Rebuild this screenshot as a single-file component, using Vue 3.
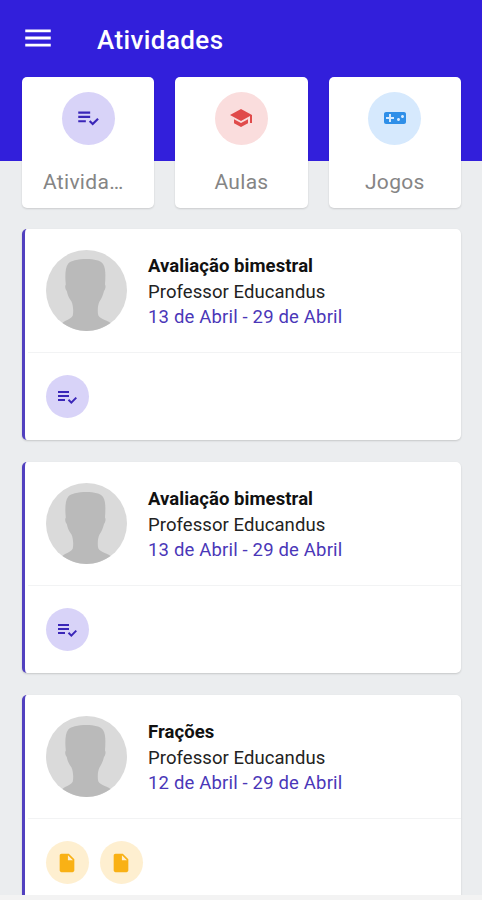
<template>
  <div class="page">
    <header class="header">
      <button class="menu-btn" aria-label="Menu">
        <svg viewBox="0 0 24 24"><path d="M3 18h18v-2H3v2zm0-5h18v-2H3v2zm0-7v2h18V6H3z" /></svg>
      </button>
      <h1>Atividades</h1>
    </header>

    <nav class="tabs">
      <div v-for="tab in tabs" :key="tab.label" class="tab">
        <span :class="['icon', 'icon-lg', tab.color]">
          <svg viewBox="0 0 24 24"><path :d="icons[tab.icon]" /></svg>
        </span>
        <span class="tab-label">{{ tab.label }}</span>
      </div>
    </nav>

    <main class="list">
      <article v-for="item in activities" :key="item.id" class="card">
        <div class="card-info">
          <svg class="avatar" viewBox="0 0 81 81">
            <circle class="avatar-bg" cx="40.5" cy="40.5" r="40.5" />
            <path
              class="avatar-person"
              d="M16.500 73C20 69.500 27 69 27 64C27.500 60 27 55 25.500 51.500C23 48 21.500 45 20.800 41C19 39 18.800 36 19.800 34.500C19 27 19 18 22 14C26 8 53 7 57 14C60 18 59.500 27 59 34.500C60 36 59.500 39 58 41C57 45 55.500 48.500 53.500 51.500C51.800 55 51.500 60 52 64C52.500 69 60 69.500 64.500 73A40.500 40.500 0 0 1 16.500 73Z"
            />
          </svg>
          <div class="card-text">
            <strong>{{ item.title }}</strong>
            <span>{{ item.teacher }}</span>
            <span class="date">{{ item.period }}</span>
          </div>
        </div>
        <div class="card-actions">
          <span v-for="(action, idx) in item.actions" :key="idx" :class="['icon', action.icon, action.color]">
            <svg viewBox="0 0 24 24"><path :d="icons[action.icon]" /></svg>
          </span>
        </div>
      </article>
    </main>
  </div>
</template>

<script setup>
import { ref } from 'vue'

const icons = {
  check: 'M3 10h11v2H3zm0-4h11v2H3zm0 8h7v2H3zm17.59-2.07l-4.25 4.24-2.12-2.12-1.41 1.41L16.34 19 22 13.34z',
  school: 'M5 13.18v4L12 21l7-3.82v-4L12 17l-7-3.82zM12 3L1 9l11 6 9-4.91V17h2V9L12 3z',
  game: 'M21 6H3c-1.1 0-2 .9-2 2v8c0 1.1.9 2 2 2h18c1.1 0 2-.9 2-2V8c0-1.1-.9-2-2-2zm-10 7H8v3H6v-3H3v-2h3V8h2v3h3v2zm4.5 2c-.83 0-1.5-.67-1.5-1.5s.67-1.5 1.5-1.5 1.5.67 1.5 1.5-.67 1.5-1.5 1.5zm4-3c-.83 0-1.5-.67-1.5-1.5S18.67 9 19.5 9s1.5.67 1.5 1.5-.67 1.5-1.5 1.5z',
  file: 'M6 2c-1.1 0-1.99.9-1.99 2L4 20c0 1.1.89 2 1.99 2H18c1.1 0 2-.9 2-2V8l-6-6H6zm7 7V3.5L18.5 9H13z'
}

const tabs = ref([
  { label: 'Atividades', icon: 'check', color: 'primary' },
  { label: 'Aulas', icon: 'school', color: 'danger' },
  { label: 'Jogos', icon: 'game', color: 'info' }
])

const activities = ref([
  {
    id: 1,
    title: 'Avaliação bimestral',
    teacher: 'Professor Educandus',
    period: '13 de Abril - 29 de Abril',
    actions: [{ icon: 'check', color: 'primary' }]
  },
  {
    id: 2,
    title: 'Avaliação bimestral',
    teacher: 'Professor Educandus',
    period: '13 de Abril - 29 de Abril',
    actions: [{ icon: 'check', color: 'primary' }]
  },
  {
    id: 3,
    title: 'Frações',
    teacher: 'Professor Educandus',
    period: '12 de Abril - 29 de Abril',
    actions: [
      { icon: 'file', color: 'warning' },
      { icon: 'file', color: 'warning' }
    ]
  }
])
</script>

<style>
body {
  margin: 0;
  overflow: hidden;
}
</style>

<style scoped>
.page {
  box-sizing: border-box;
  height: 900px;
  display: flex;
  flex-direction: column;
  overflow: hidden;
  background: #ebedef;
  border-bottom: 5px solid #f3f3f3;
  font-family: Roboto, sans-serif;
}

.header {
  box-sizing: border-box;
  flex: none;
  height: 161px;
  padding: 21px 21px 0;
  display: flex;
  align-items: flex-start;
  gap: 42px;
  background: #321fdb;
  color: #fff;
}

.menu-btn {
  padding: 0;
  border: none;
  background: none;
  width: 34px;
  height: 34px;
}

.menu-btn svg {
  display: block;
  width: 34px;
  height: 34px;
  fill: #fff;
}

h1 {
  margin: 0;
  font-size: 26px;
  font-weight: 500;
  line-height: 38px;
  letter-spacing: 0.4px;
}

.tabs {
  flex: none;
  display: grid;
  grid-template-columns: repeat(3, 1fr);
  gap: 21px;
  margin-top: -84px;
  padding: 0 21px 0 22px;
}

.tab {
  box-sizing: border-box;
  height: 131px;
  padding: 14.5px 21px 0;
  display: flex;
  flex-direction: column;
  align-items: center;
  gap: 22px;
  min-width: 0;
  background: #fff;
  border-radius: 5px;
  box-shadow: 0 1px 2px rgba(0, 0, 0, 0.14);
}

.tab-label {
  max-width: 100%;
  overflow: hidden;
  text-overflow: ellipsis;
  white-space: nowrap;
  font-size: 21px;
  line-height: 30px;
  letter-spacing: 0.3px;
  color: #858585;
}

.icon {
  flex: none;
  width: 43px;
  height: 43px;
  display: flex;
  align-items: center;
  justify-content: center;
  border-radius: 50%;
}

.icon svg {
  width: 24px;
  height: 24px;
  fill: currentColor;
}

.icon.check svg {
  margin-right: 1px;
}

.icon.file svg {
  width: 22px;
  height: 22px;
  margin-right: 1px;
}

.icon-lg {
  width: 53px;
  height: 53px;
}

.icon-lg.primary svg {
  width: 26px;
  height: 26px;
}

.primary {
  color: #3a26b8;
  background: #d8d3f8;
}

.danger {
  color: #e04b4b;
  background: #fadddd;
}

.info {
  color: #2f8fe8;
  background: #d6e9fd;
}

.warning {
  color: #f9b115;
  background: #feefd0;
}

.list {
  flex: none;
  display: flex;
  flex-direction: column;
  gap: 22px;
  padding: 21px 21px 0 22px;
}

.card {
  box-sizing: border-box;
  height: 211px;
  background: #fff;
  border-left: 3px solid #5140bf;
  border-radius: 5px;
  box-shadow: 0 1px 2px rgba(0, 0, 0, 0.16);
}

.card-info {
  box-sizing: border-box;
  height: 124px;
  padding: 21px 21px 0 18px;
  display: flex;
  gap: 21px;
  margin-left: 3px;
  border-bottom: 1px solid #f2f3f4;
}

.avatar {
  flex: none;
  width: 81px;
  height: 81px;
}

.avatar-bg {
  fill: #dadada;
}

.avatar-person {
  fill: #bababa;
}

.card-text {
  display: flex;
  flex-direction: column;
  padding-top: 4px;
  font-size: 18.5px;
  line-height: 25.5px;
  letter-spacing: 0.07px;
  color: #222;
}

.card-text strong {
  font-weight: 700;
  color: #111;
}

.card-text .date {
  letter-spacing: 0.17px;
  color: #4a37b8;
}

.card-actions {
  display: flex;
  gap: 11px;
  padding: 22px 21px;
}
</style>
